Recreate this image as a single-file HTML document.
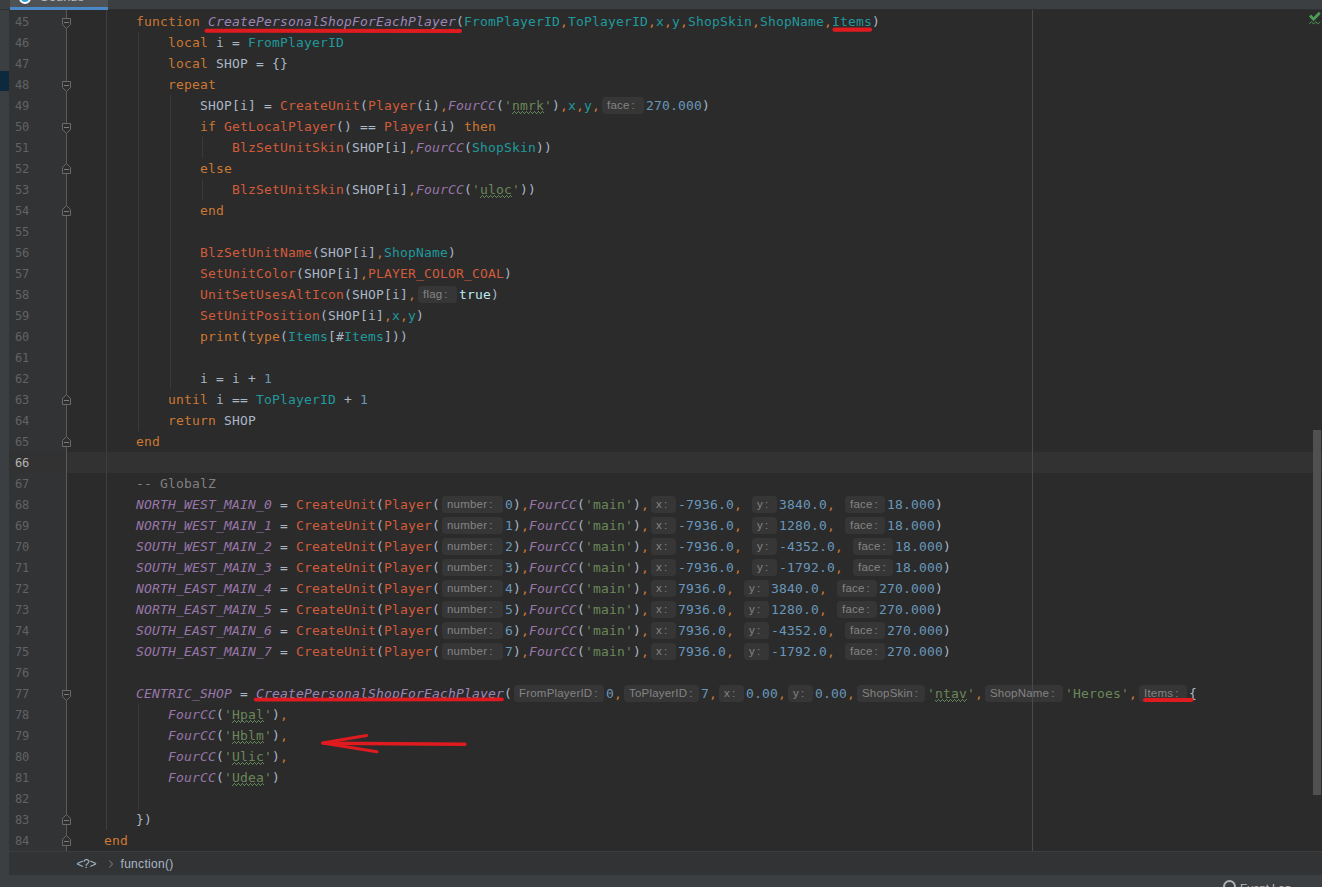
<!DOCTYPE html>
<html lang="en"><head><meta charset="utf-8"><title>Editor</title>
<style>
html,body{margin:0;padding:0;}
body{width:1322px;height:887px;position:relative;overflow:hidden;background:#2b2b2b;font-family:"DejaVu Sans Mono","Liberation Mono",monospace;font-size:13px;color:#a9b7c6;}
div,span{box-sizing:border-box;}
.abs{position:absolute;}
.ln{position:absolute;height:21px;line-height:21px;white-space:pre;letter-spacing:0.1733px;font-size:13px;}
.num{position:absolute;left:15px;width:20px;height:21px;line-height:22px;color:#606366;letter-spacing:-0.22px;font-size:12px;}
.num.cur{color:#b4b4b4;}
.k{color:#cc7832;}
.f{color:#9d86b8;font-style:italic;}
.p{color:#20999d;}
.g{color:#d25b3a;}
.i{color:#9876aa;font-style:italic;}
.s{color:#6a8759;}
.sw{color:#6a8759;}
.n{color:#6897bb;}
.c{color:#808080;}
.b{color:#bfe9f2;}
.o{color:#cc7832;}
.h{display:inline-block;vertical-align:top;margin:2px 2px 0 2px;height:17px;line-height:16px;padding-left:5px;background:#363636;border-radius:4px;color:#848484;font-family:"Liberation Sans",sans-serif;font-size:11.5px;letter-spacing:0.2px;text-align:left;overflow:hidden;white-space:pre;}
.co{margin-left:2px;}
.bc{font-family:"Liberation Sans",sans-serif;font-size:12px;color:#a9b7c6;line-height:15px;white-space:pre;}

</style></head>
<body>
<div class="abs" style="left:0;top:0;width:1322px;height:9px;background:#3c3f41;"></div>
<div class="abs" style="left:0;top:9px;width:1322px;height:1px;background:#2f3031;"></div>
<div class="abs tab" style="left:10px;top:0;width:98px;height:7px;background:#4e5254;overflow:hidden;">
<span class="abs" style="left:9px;top:-8px;width:8px;height:8px;border-radius:50%;background:#2d9fd8;border:2px solid #ffffff;box-sizing:content-box;"></span>
<span class="abs" style="left:30px;top:-10px;font-family:'Liberation Sans',sans-serif;font-size:13px;line-height:14px;color:#bbbbbb;white-space:pre;">Sounds</span>
</div>
<div class="abs" style="left:10px;top:7px;width:98px;height:3px;background:#4a88c7;"></div>
<div class="abs" style="left:0;top:10px;width:9px;height:865px;background:#3c3f41;"></div>
<div class="abs" style="left:0;top:71px;width:9px;height:20px;background:#0d293e;"></div>
<div class="abs" style="left:9px;top:10px;width:57px;height:842px;background:#313335;"></div>
<div class="abs" style="left:9px;top:452px;width:1313px;height:21px;background:#323232;"></div>
<div class="abs" style="left:1313px;top:430px;width:8px;height:365px;background:#505050;"></div>
<div class="abs" style="left:9px;top:851px;width:1313px;height:24px;background:#313335;border-top:1px solid #3c3e40;"></div>
<div class="abs" style="left:0;top:875px;width:1322px;height:12px;background:#3c3f41;"></div>
<div class="abs bc" style="left:76.5px;top:857px;letter-spacing:-0.4px;">&lt;?&gt;</div>
<div class="abs bc" style="left:120.5px;top:857px;letter-spacing:0.3px;">function()</div>
<div class="abs" style="left:1223px;top:880px;width:13px;height:13px;border:2px solid #afb1b3;border-radius:50%;"></div>
<div class="abs" style="left:1240px;top:881px;font-family:'Liberation Sans',sans-serif;font-size:11.3px;line-height:15px;color:#bbbbbb;white-space:pre;">Event Log</div>

<div class="num" style="top:11px">45</div>
<div class="num" style="top:32px">46</div>
<div class="num" style="top:53px">47</div>
<div class="num" style="top:74px">48</div>
<div class="num" style="top:95px">49</div>
<div class="num" style="top:116px">50</div>
<div class="num" style="top:137px">51</div>
<div class="num" style="top:158px">52</div>
<div class="num" style="top:179px">53</div>
<div class="num" style="top:200px">54</div>
<div class="num" style="top:221px">55</div>
<div class="num" style="top:242px">56</div>
<div class="num" style="top:263px">57</div>
<div class="num" style="top:284px">58</div>
<div class="num" style="top:305px">59</div>
<div class="num" style="top:326px">60</div>
<div class="num" style="top:347px">61</div>
<div class="num" style="top:368px">62</div>
<div class="num" style="top:389px">63</div>
<div class="num" style="top:410px">64</div>
<div class="num" style="top:431px">65</div>
<div class="num cur" style="top:452px">66</div>
<div class="num" style="top:473px">67</div>
<div class="num" style="top:494px">68</div>
<div class="num" style="top:515px">69</div>
<div class="num" style="top:536px">70</div>
<div class="num" style="top:557px">71</div>
<div class="num" style="top:578px">72</div>
<div class="num" style="top:599px">73</div>
<div class="num" style="top:620px">74</div>
<div class="num" style="top:641px">75</div>
<div class="num" style="top:662px">76</div>
<div class="num" style="top:683px">77</div>
<div class="num" style="top:704px">78</div>
<div class="num" style="top:725px">79</div>
<div class="num" style="top:746px">80</div>
<div class="num" style="top:767px">81</div>
<div class="num" style="top:788px">82</div>
<div class="num" style="top:809px">83</div>
<div class="num" style="top:830px">84</div>
<div class="ln" style="top:11px;left:136px"><span class="k">function </span><span class="f">CreatePersonalShopForEachPlayer</span>(<span class="p">FromPlayerID</span><span class="o">,</span><span class="p">ToPlayerID</span><span class="o">,</span><span class="p">x</span><span class="o">,</span><span class="p">y</span><span class="o">,</span><span class="p">ShopSkin</span><span class="o">,</span><span class="p">ShopName</span><span class="o">,</span><span class="p">Items</span>)</div>
<div class="ln" style="top:32px;left:168px"><span class="k">local </span>i = <span class="p">FromPlayerID</span></div>
<div class="ln" style="top:53px;left:168px"><span class="k">local </span>SHOP = {}</div>
<div class="ln" style="top:74px;left:168px"><span class="k">repeat</span></div>
<div class="ln" style="top:95px;left:200px">SHOP[i] = <span class="g">CreateUnit</span>(<span class="g">Player</span>(i)<span class="o">,</span><span class="i">FourCC</span>(<span class="s">'</span><span class="sw">nmrk</span><span class="s">'</span>)<span class="o">,</span><span class="p">x</span><span class="o">,</span><span class="p">y</span><span class="o">,</span><span class="h" style="width:42px">face<span class="co">:</span></span><span class="n">270.000</span>)</div>
<div class="ln" style="top:116px;left:200px"><span class="k">if </span><span class="g">GetLocalPlayer</span>() == <span class="g">Player</span>(i) <span class="k">then</span></div>
<div class="ln" style="top:137px;left:232px"><span class="g">BlzSetUnitSkin</span>(SHOP[i]<span class="o">,</span><span class="i">FourCC</span>(<span class="p">ShopSkin</span>))</div>
<div class="ln" style="top:158px;left:200px"><span class="k">else</span></div>
<div class="ln" style="top:179px;left:232px"><span class="g">BlzSetUnitSkin</span>(SHOP[i]<span class="o">,</span><span class="i">FourCC</span>(<span class="s">'</span><span class="sw">uloc</span><span class="s">'</span>))</div>
<div class="ln" style="top:200px;left:200px"><span class="k">end</span></div>
<div class="ln" style="top:242px;left:200px"><span class="g">BlzSetUnitName</span>(SHOP[i]<span class="o">,</span><span class="p">ShopName</span>)</div>
<div class="ln" style="top:263px;left:200px"><span class="g">SetUnitColor</span>(SHOP[i]<span class="o">,</span><span class="g">PLAYER_COLOR_COAL</span>)</div>
<div class="ln" style="top:284px;left:200px"><span class="g">UnitSetUsesAltIcon</span>(SHOP[i]<span class="o">,</span><span class="h" style="width:39px">flag<span class="co">:</span></span><span class="b">true</span>)</div>
<div class="ln" style="top:305px;left:200px"><span class="g">SetUnitPosition</span>(SHOP[i]<span class="o">,</span><span class="p">x</span><span class="o">,</span><span class="p">y</span>)</div>
<div class="ln" style="top:326px;left:200px"><span class="k">print</span>(<span class="k">type</span>(<span class="p">Items</span>[#<span class="p">Items</span>]))</div>
<div class="ln" style="top:368px;left:200px">i = i + <span class="n">1</span></div>
<div class="ln" style="top:389px;left:168px"><span class="k">until </span>i == <span class="p">ToPlayerID</span> + <span class="n">1</span></div>
<div class="ln" style="top:410px;left:168px"><span class="k">return </span>SHOP</div>
<div class="ln" style="top:431px;left:136px"><span class="k">end</span></div>
<div class="ln" style="top:473px;left:136px"><span class="c">-- GlobalZ</span></div>
<div class="ln" style="top:494px;left:136px"><span class="i">NORTH_WEST_MAIN_0</span> = <span class="g">CreateUnit</span>(<span class="g">Player</span>(<span class="h" style="width:61px">number<span class="co">:</span></span><span class="n">0</span>)<span class="o">,</span><span class="i">FourCC</span>(<span class="s">'main'</span>)<span class="o">,</span><span class="h" style="width:25px">x<span class="co">:</span></span><span class="n">-7936.0</span><span class="o">,</span> <span class="h" style="width:25px">y<span class="co">:</span></span><span class="n">3840.0</span><span class="o">,</span> <span class="h" style="width:40px">face<span class="co">:</span></span><span class="n">18.000</span>)</div>
<div class="ln" style="top:515px;left:136px"><span class="i">NORTH_WEST_MAIN_1</span> = <span class="g">CreateUnit</span>(<span class="g">Player</span>(<span class="h" style="width:61px">number<span class="co">:</span></span><span class="n">1</span>)<span class="o">,</span><span class="i">FourCC</span>(<span class="s">'main'</span>)<span class="o">,</span><span class="h" style="width:25px">x<span class="co">:</span></span><span class="n">-7936.0</span><span class="o">,</span> <span class="h" style="width:25px">y<span class="co">:</span></span><span class="n">1280.0</span><span class="o">,</span> <span class="h" style="width:40px">face<span class="co">:</span></span><span class="n">18.000</span>)</div>
<div class="ln" style="top:536px;left:136px"><span class="i">SOUTH_WEST_MAIN_2</span> = <span class="g">CreateUnit</span>(<span class="g">Player</span>(<span class="h" style="width:61px">number<span class="co">:</span></span><span class="n">2</span>)<span class="o">,</span><span class="i">FourCC</span>(<span class="s">'main'</span>)<span class="o">,</span><span class="h" style="width:25px">x<span class="co">:</span></span><span class="n">-7936.0</span><span class="o">,</span> <span class="h" style="width:25px">y<span class="co">:</span></span><span class="n">-4352.0</span><span class="o">,</span> <span class="h" style="width:40px">face<span class="co">:</span></span><span class="n">18.000</span>)</div>
<div class="ln" style="top:557px;left:136px"><span class="i">SOUTH_WEST_MAIN_3</span> = <span class="g">CreateUnit</span>(<span class="g">Player</span>(<span class="h" style="width:61px">number<span class="co">:</span></span><span class="n">3</span>)<span class="o">,</span><span class="i">FourCC</span>(<span class="s">'main'</span>)<span class="o">,</span><span class="h" style="width:25px">x<span class="co">:</span></span><span class="n">-7936.0</span><span class="o">,</span> <span class="h" style="width:25px">y<span class="co">:</span></span><span class="n">-1792.0</span><span class="o">,</span> <span class="h" style="width:40px">face<span class="co">:</span></span><span class="n">18.000</span>)</div>
<div class="ln" style="top:578px;left:136px"><span class="i">NORTH_EAST_MAIN_4</span> = <span class="g">CreateUnit</span>(<span class="g">Player</span>(<span class="h" style="width:61px">number<span class="co">:</span></span><span class="n">4</span>)<span class="o">,</span><span class="i">FourCC</span>(<span class="s">'main'</span>)<span class="o">,</span><span class="h" style="width:25px">x<span class="co">:</span></span><span class="n">7936.0</span><span class="o">,</span> <span class="h" style="width:25px">y<span class="co">:</span></span><span class="n">3840.0</span><span class="o">,</span> <span class="h" style="width:40px">face<span class="co">:</span></span><span class="n">270.000</span>)</div>
<div class="ln" style="top:599px;left:136px"><span class="i">NORTH_EAST_MAIN_5</span> = <span class="g">CreateUnit</span>(<span class="g">Player</span>(<span class="h" style="width:61px">number<span class="co">:</span></span><span class="n">5</span>)<span class="o">,</span><span class="i">FourCC</span>(<span class="s">'main'</span>)<span class="o">,</span><span class="h" style="width:25px">x<span class="co">:</span></span><span class="n">7936.0</span><span class="o">,</span> <span class="h" style="width:25px">y<span class="co">:</span></span><span class="n">1280.0</span><span class="o">,</span> <span class="h" style="width:40px">face<span class="co">:</span></span><span class="n">270.000</span>)</div>
<div class="ln" style="top:620px;left:136px"><span class="i">SOUTH_EAST_MAIN_6</span> = <span class="g">CreateUnit</span>(<span class="g">Player</span>(<span class="h" style="width:61px">number<span class="co">:</span></span><span class="n">6</span>)<span class="o">,</span><span class="i">FourCC</span>(<span class="s">'main'</span>)<span class="o">,</span><span class="h" style="width:25px">x<span class="co">:</span></span><span class="n">7936.0</span><span class="o">,</span> <span class="h" style="width:25px">y<span class="co">:</span></span><span class="n">-4352.0</span><span class="o">,</span> <span class="h" style="width:40px">face<span class="co">:</span></span><span class="n">270.000</span>)</div>
<div class="ln" style="top:641px;left:136px"><span class="i">SOUTH_EAST_MAIN_7</span> = <span class="g">CreateUnit</span>(<span class="g">Player</span>(<span class="h" style="width:61px">number<span class="co">:</span></span><span class="n">7</span>)<span class="o">,</span><span class="i">FourCC</span>(<span class="s">'main'</span>)<span class="o">,</span><span class="h" style="width:25px">x<span class="co">:</span></span><span class="n">7936.0</span><span class="o">,</span> <span class="h" style="width:25px">y<span class="co">:</span></span><span class="n">-1792.0</span><span class="o">,</span> <span class="h" style="width:40px">face<span class="co">:</span></span><span class="n">270.000</span>)</div>
<div class="ln" style="top:683px;left:136px"><span class="i">CENTRIC_SHOP</span> = <span class="f">CreatePersonalShopForEachPlayer</span>(<span class="h" style="width:90px">FromPlayerID<span class="co">:</span></span><span class="n">0</span><span class="o">,</span><span class="h" style="width:75px">ToPlayerID<span class="co">:</span></span><span class="n">7</span><span class="o">,</span><span class="h" style="width:25px">x<span class="co">:</span></span><span class="n">0.00</span><span class="o">,</span><span class="h" style="width:25px">y<span class="co">:</span></span><span class="n">0.00</span><span class="o">,</span><span class="h" style="width:68px">ShopSkin<span class="co">:</span></span><span class="s">'</span><span class="sw">ntav</span><span class="s">'</span><span class="o">,</span><span class="h" style="width:78px">ShopName<span class="co">:</span></span><span class="s">'Heroes'</span><span class="o">,</span><span class="h" style="width:48px">Items<span class="co">:</span></span>{</div>
<div class="ln" style="top:704px;left:168px"><span class="i">FourCC</span>(<span class="s">'</span><span class="sw">Hpal</span><span class="s">'</span>)<span class="o">,</span></div>
<div class="ln" style="top:725px;left:168px"><span class="i">FourCC</span>(<span class="s">'</span><span class="sw">Hblm</span><span class="s">'</span>)<span class="o">,</span></div>
<div class="ln" style="top:746px;left:168px"><span class="i">FourCC</span>(<span class="s">'</span><span class="sw">Ulic</span><span class="s">'</span>)<span class="o">,</span></div>
<div class="ln" style="top:767px;left:168px"><span class="i">FourCC</span>(<span class="s">'</span><span class="sw">Udea</span><span class="s">'</span>)</div>
<div class="ln" style="top:809px;left:136px">})</div>
<div class="ln" style="top:830px;left:104px"><span class="k">end</span></div>
<svg class="abs" style="left:0;top:0" width="1322" height="887" viewBox="0 0 1322 887">
<defs><pattern id="wv" x="0" y="0" width="4" height="3" patternUnits="userSpaceOnUse" shape-rendering="crispEdges"><rect x="2" y="0" width="1" height="1" fill="#62855a"/><rect x="1" y="1" width="1" height="1" fill="#62855a"/><rect x="3" y="1" width="1" height="1" fill="#62855a"/><rect x="0" y="2" width="1" height="1" fill="#62855a"/></pattern></defs>
<rect x="138" y="32" width="1" height="399" fill="#3a3a3a"/>
<rect x="170" y="95" width="1" height="294" fill="#3a3a3a"/>
<rect x="202" y="137" width="1" height="21" fill="#3a3a3a"/>
<rect x="202" y="179" width="1" height="21" fill="#3a3a3a"/>
<rect x="138" y="704" width="1" height="105" fill="#3a3a3a"/>
<rect x="66" y="10" width="1" height="841" fill="#5a5a5a"/>
<rect x="106" y="10" width="1" height="820" fill="#3e3e3e"/>
<path d="M62.5 18.5H70.5V24.5L66.5 28.5L62.5 24.5Z" fill="#2d2e2f" stroke="#6a6a6a" stroke-width="1"/>
<rect x="64" y="22" width="5" height="1" fill="#7c7c7c"/>
<path d="M62.5 81.5H70.5V87.5L66.5 91.5L62.5 87.5Z" fill="#2d2e2f" stroke="#6a6a6a" stroke-width="1"/>
<rect x="64" y="85" width="5" height="1" fill="#7c7c7c"/>
<path d="M62.5 123.5H70.5V129.5L66.5 133.5L62.5 129.5Z" fill="#2d2e2f" stroke="#6a6a6a" stroke-width="1"/>
<rect x="64" y="127" width="5" height="1" fill="#7c7c7c"/>
<path d="M62.5 690.5H70.5V696.5L66.5 700.5L62.5 696.5Z" fill="#2d2e2f" stroke="#6a6a6a" stroke-width="1"/>
<rect x="64" y="694" width="5" height="1" fill="#7c7c7c"/>
<path d="M62.5 173.5H70.5V167.5L66.5 163.5L62.5 167.5Z" fill="#2d2e2f" stroke="#6a6a6a" stroke-width="1"/>
<rect x="64" y="169" width="5" height="1" fill="#7c7c7c"/>
<path d="M62.5 215.5H70.5V209.5L66.5 205.5L62.5 209.5Z" fill="#2d2e2f" stroke="#6a6a6a" stroke-width="1"/>
<rect x="64" y="211" width="5" height="1" fill="#7c7c7c"/>
<path d="M62.5 404.5H70.5V398.5L66.5 394.5L62.5 398.5Z" fill="#2d2e2f" stroke="#6a6a6a" stroke-width="1"/>
<rect x="64" y="400" width="5" height="1" fill="#7c7c7c"/>
<path d="M62.5 446.5H70.5V440.5L66.5 436.5L62.5 440.5Z" fill="#2d2e2f" stroke="#6a6a6a" stroke-width="1"/>
<rect x="64" y="442" width="5" height="1" fill="#7c7c7c"/>
<path d="M62.5 824.5H70.5V818.5L66.5 814.5L62.5 818.5Z" fill="#2d2e2f" stroke="#6a6a6a" stroke-width="1"/>
<rect x="64" y="820" width="5" height="1" fill="#7c7c7c"/>
<path d="M62.5 845.5H70.5V839.5L66.5 835.5L62.5 839.5Z" fill="#2d2e2f" stroke="#6a6a6a" stroke-width="1"/>
<rect x="64" y="841" width="5" height="1" fill="#7c7c7c"/>
<rect x="1032" y="10" width="1" height="841" fill="#4a4a4a"/>
<rect x="512" y="111" width="32" height="3" fill="url(#wv)" transform="translate(0,0)"/>
<rect x="480" y="195" width="32" height="3" fill="url(#wv)" transform="translate(0,0)"/>
<rect x="935" y="699" width="32" height="3" fill="url(#wv)" transform="translate(0,0)"/>
<rect x="232" y="720" width="32" height="3" fill="url(#wv)" transform="translate(0,0)"/>
<rect x="232" y="741" width="32" height="3" fill="url(#wv)" transform="translate(0,0)"/>
<rect x="232" y="762" width="32" height="3" fill="url(#wv)" transform="translate(0,0)"/>
<rect x="232" y="783" width="32" height="3" fill="url(#wv)" transform="translate(0,0)"/>
<path d="M109.5 860.5L112.5 864L109.5 867.5" fill="none" stroke="#808387" stroke-width="1"/>
<path d="M1310 15.6L1313.5 19.2L1319.8 12.8" fill="none" stroke="#499c54" stroke-width="2.8"/>
<path d="M1309 24.1L1311.4 21.6L1313.6 24.1L1315.8 21.6L1317.8 24.1L1320.2 21.6" fill="none" stroke="#499c54" stroke-width="0.9"/>
<path d="M206.5 30.7L460 31" fill="none" stroke="#e01b1f" stroke-width="4" stroke-linecap="round"/>
<path d="M834.5 29.7L870 29.7" fill="none" stroke="#e01b1f" stroke-width="4.2" stroke-linecap="round"/>
<path d="M255.5 699.6L502 699.4" fill="none" stroke="#e01b1f" stroke-width="3.6" stroke-linecap="round"/>
<path d="M1145 700L1191.5 700" fill="none" stroke="#e01b1f" stroke-width="4" stroke-linecap="round"/>
<path d="M323.5 743.2L465 744.3" fill="none" stroke="#e01b1f" stroke-width="3.4" stroke-linecap="round"/>
<path d="M366.5 735.5L322.5 743L377 751.8" fill="none" stroke="#e01b1f" stroke-width="3.1" stroke-linecap="round" stroke-linejoin="round"/>
</svg>

</body></html>
